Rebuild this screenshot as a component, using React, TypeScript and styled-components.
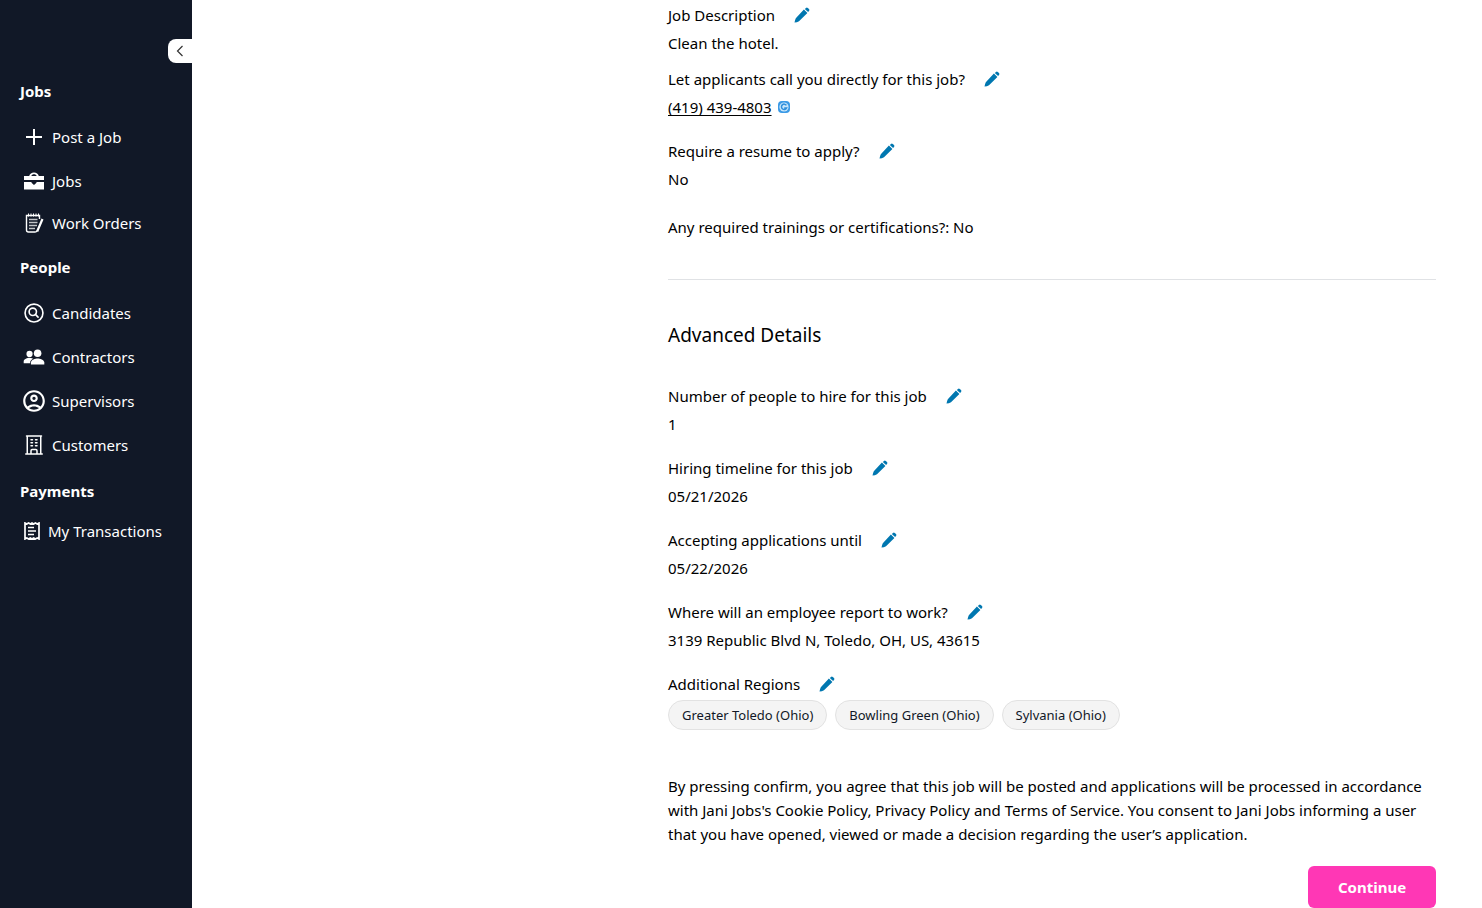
import React, { useState } from "react";
import styled, { createGlobalStyle } from "styled-components";
import { IoPeopleSharp, IoSearchCircleOutline } from "react-icons/io5";
import { MdOutlineAccountCircle } from "react-icons/md";
import { HiOutlineBuildingOffice } from "react-icons/hi2";

const GlobalStyle = createGlobalStyle`
  *, *::before, *::after { box-sizing: border-box; }
  body {
    margin: 0;
    background: #fff;
    color: #000;
    font: 400 15px/24px "Noto Sans", "Open Sans", sans-serif;
  }
  h2, h3, p, dl, dt, dd, ul { margin: 0; padding: 0; }
  button { font: inherit; border: 0; padding: 0; cursor: pointer; }
`;

const Page = styled.div`
  display: flex;
  min-height: 100vh;
`;

const Sidebar = styled.aside`
  display: flex;
  flex-direction: column;
  flex: none;
  width: 192px;
  padding-top: 39px;
  background: #111827;
  color: #fff;
`;

const CollapseButton = styled.button`
  display: flex;
  align-items: center;
  justify-content: center;
  align-self: flex-end;
  width: 24px;
  height: 24px;
  border-radius: 8px 0 0 8px;
  background: #fff;
  color: #333;
`;

const Nav = styled.nav`
  display: flex;
  flex-direction: column;
  gap: 12px;
  padding: 16px 20px;
`;

const NavHeading = styled.h2`
  font-size: 15px;
  line-height: 24px;
  font-weight: 700;
`;

const NavList = styled.ul`
  list-style: none;
`;

const NavLink = styled.a<{ $height: number }>`
  display: flex;
  align-items: center;
  gap: 4px;
  height: ${(p) => p.$height}px;
  color: #fff;
  text-decoration: none;
  white-space: nowrap;
`;

const NavIcon = styled.span<{ $compact?: boolean }>`
  display: flex;
  align-items: center;
  justify-content: center;
  flex: none;
  width: ${(p) => (p.$compact ? 24 : 28)}px;
`;

const Main = styled.main`
  display: flex;
  flex: 1;
  justify-content: flex-end;
  min-width: 0;
  padding: 3px 46px 0 24px;
`;

const Content = styled.div`
  width: 100%;
  max-width: 768px;
`;

const FieldList = styled.dl`
  display: flex;
  flex-direction: column;
  gap: 20px;
`;

const Field = styled.div<{ $tight?: boolean }>`
  display: flex;
  flex-direction: column;
  gap: 4px;
  margin-bottom: ${(p) => (p.$tight ? -8 : 0)}px;
`;

const FieldLabel = styled.dt`
  display: flex;
  align-items: center;
  gap: 19px;
`;

const FieldValue = styled.dd`
  display: flex;
  align-items: center;
  gap: 6px;
`;

const EditButton = styled.button`
  display: flex;
  background: none;
  color: #0077b0;
`;

const PhoneLink = styled.a`
  color: #000;
  text-decoration: underline;
  text-underline-offset: 2px;
`;

const Note = styled.p`
  margin-top: 24px;
`;

const Divider = styled.hr`
  height: 1px;
  margin: 40px 0 41px;
  border: 0;
  background: #e0e2e5;
`;

const SectionTitle = styled.h3`
  margin-bottom: 35px;
  font-size: 19px;
  line-height: 28px;
  font-weight: 400;
`;

const Chips = styled.dd`
  display: flex;
  flex-wrap: wrap;
  gap: 8px;
`;

const Chip = styled.span`
  padding: 0 13px;
  border: 1px solid #e2e2e2;
  border-radius: 15px;
  background: #f4f4f4;
  color: #111827;
  font-size: 13px;
  line-height: 28px;
`;

const Terms = styled.p`
  margin-top: 44px;
`;

const Actions = styled.div`
  display: flex;
  justify-content: flex-end;
  margin-top: 20px;
`;

const ContinueButton = styled.button`
  width: 128px;
  height: 42px;
  border-radius: 6px;
  background: #ff37b5;
  color: #fff;
  font-weight: 700;
`;

const ChevronIcon = () => (
  <svg width="10" height="12" viewBox="0 0 10 12" fill="none" stroke="currentColor" strokeWidth="1.2">
    <path d="M7.5 1 2.5 6l5 5" />
  </svg>
);

const PlusIcon = () => (
  <svg width="16" height="16" viewBox="0 0 16 16" fill="currentColor">
    <path d="M7 0h2v7h7v2H9v7H7V9H0V7h7z" />
  </svg>
);

const BriefcaseIcon = () => (
  <svg width="20" height="18" viewBox="0 0 20 18" fill="currentColor">
    <path d="M0 4h5.2C5.8 1.8 7.6.5 10 .5S14.2 1.8 14.8 4H20v4H0zM7.3 4h5.4C12.3 2.700 11.300 2.200 10 2.200S7.700 2.700 7.300 4z" fillRule="evenodd" />
    <path d="M0 10h7.500v.8L10 13l2.500-2.200V10H20v7.500H0z" />
  </svg>
);

const WorkOrderIcon = () => (
  <svg width="20" height="20" viewBox="0 0 20 20" fill="none" stroke="currentColor">
    <path d="M15.500 6V2.500H2.500v14.500q0 2 2 2H11q1.500 0 2-1.300" strokeWidth="1.400" />
    <path d="M4.500 .5v3M7 .5v3M9.500 .5v3M12 .5v3M14.500 .5v3" strokeWidth="1" />
    <path d="M5 6.500h8.500M5 9.500h8.500M5 12.500h8M5 15.500h6" strokeWidth="1.700" opacity=".75" />
    <path d="m18.500 6-4.500 10.500-.8 2" strokeWidth="2.200" />
  </svg>
);

const ReceiptIcon = () => (
  <svg width="16" height="18" viewBox="0 0 16 18" fill="none" stroke="currentColor">
    <path d="M1 1 2.800 2 4.600 1 6.300 2 8 1 9.700 2 11.400 1 13.200 2 15 1V17L13.200 16 11.400 17 9.700 16 8 17 6.300 16 4.600 17 2.800 16 1 17z" strokeWidth="1.700" />
    <path d="M4 5.500h6M4 9h8M4 12.500h6" strokeWidth="1.700" />
  </svg>
);

const PencilIcon = () => (
  <svg width="16" height="16" viewBox="0 0 16 16" fill="currentColor">
    <path d="M9.900 2.500 13.400 5.900 5 14.200Q3 15.300.5 15.600 .8 13.300 1.800 11.200zM10.800 1.900 12 .9Q12.900.1 13.800.9L15 2.100Q15.900 3 15 3.900L14.100 5.100z" />
  </svg>
);

const CallBadgeIcon = () => (
  <svg width="12" height="12" viewBox="0 0 12 12" fill="none">
    <rect width="12" height="12" rx="4" fill="#3b9ae6" />
    <circle cx="6" cy="6" r="4.600" fill="#c9e6fa" />
    <path d="M8.400 4.300A2.700 2.700 0 1 0 8.600 7H6.200" stroke="#2f8fdc" strokeWidth="1.500" />
  </svg>
);

type NavItem = { label: string; icon: React.ReactNode; height: number; compact?: boolean };

const sections: { title: string; items: NavItem[] }[] = [
  {
    title: "Jobs",
    items: [
      { label: "Post a Job", icon: <PlusIcon />, height: 44 },
      { label: "Jobs", icon: <BriefcaseIcon />, height: 44 },
      { label: "Work Orders", icon: <WorkOrderIcon />, height: 40 },
    ],
  },
  {
    title: "People",
    items: [
      { label: "Candidates", icon: <IoSearchCircleOutline size={26} />, height: 44 },
      { label: "Contractors", icon: <IoPeopleSharp size={22} />, height: 44 },
      { label: "Supervisors", icon: <MdOutlineAccountCircle size={26} />, height: 44 },
      { label: "Customers", icon: <HiOutlineBuildingOffice size={24} />, height: 44 },
    ],
  },
  {
    title: "Payments",
    items: [{ label: "My Transactions", icon: <ReceiptIcon />, height: 32, compact: true }],
  },
];

const advancedFields = [
  { label: "Number of people to hire for this job", value: "1" },
  { label: "Hiring timeline for this job", value: "05/21/2026" },
  { label: "Accepting applications until", value: "05/22/2026" },
  { label: "Where will an employee report to work?", value: "3139 Republic Blvd N, Toledo, OH, US, 43615" },
];

const regions = ["Greater Toledo (Ohio)", "Bowling Green (Ohio)", "Sylvania (Ohio)"];

function EditableLabel({ children }: { children: string }) {
  return (
    <FieldLabel>
      {children}
      <EditButton type="button" aria-label={`Edit ${children}`}>
        <PencilIcon />
      </EditButton>
    </FieldLabel>
  );
}

export default function App() {
  const [open, setOpen] = useState(true);
  return (
    <>
      <GlobalStyle />
      <Page>
        <Sidebar>
          <CollapseButton type="button" aria-label="Toggle menu" onClick={() => setOpen(!open)}>
            <ChevronIcon />
          </CollapseButton>
          {open && (
            <Nav>
              {sections.map((section) => (
                <React.Fragment key={section.title}>
                  <NavHeading>{section.title}</NavHeading>
                  <NavList>
                    {section.items.map((item) => (
                      <li key={item.label}>
                        <NavLink href="#" $height={item.height}>
                          <NavIcon $compact={item.compact}>{item.icon}</NavIcon>
                          {item.label}
                        </NavLink>
                      </li>
                    ))}
                  </NavList>
                </React.Fragment>
              ))}
            </Nav>
          )}
        </Sidebar>
        <Main>
          <Content>
            <FieldList>
              <Field $tight>
                <EditableLabel>Job Description</EditableLabel>
                <FieldValue>Clean the hotel.</FieldValue>
              </Field>
              <Field>
                <EditableLabel>Let applicants call you directly for this job?</EditableLabel>
                <FieldValue>
                  <PhoneLink href="tel:+14194394803">(419) 439-4803</PhoneLink>
                  <CallBadgeIcon />
                </FieldValue>
              </Field>
              <Field>
                <EditableLabel>Require a resume to apply?</EditableLabel>
                <FieldValue>No</FieldValue>
              </Field>
            </FieldList>
            <Note>Any required trainings or certifications?: No</Note>
            <Divider />
            <SectionTitle>Advanced Details</SectionTitle>
            <FieldList>
              {advancedFields.map((field) => (
                <Field key={field.label}>
                  <EditableLabel>{field.label}</EditableLabel>
                  <FieldValue>{field.value}</FieldValue>
                </Field>
              ))}
              <Field>
                <EditableLabel>Additional Regions</EditableLabel>
                <Chips>
                  {regions.map((region) => (
                    <Chip key={region}>{region}</Chip>
                  ))}
                </Chips>
              </Field>
            </FieldList>
            <Terms>
              By pressing confirm, you agree that this job will be posted and applications will be processed in
              accordance with Jani Jobs's Cookie Policy, Privacy Policy and Terms of Service. You consent to Jani Jobs
              informing a user that you have opened, viewed or made a decision regarding the user’s application.
            </Terms>
            <Actions>
              <ContinueButton type="button">Continue</ContinueButton>
            </Actions>
          </Content>
        </Main>
      </Page>
    </>
  );
}
